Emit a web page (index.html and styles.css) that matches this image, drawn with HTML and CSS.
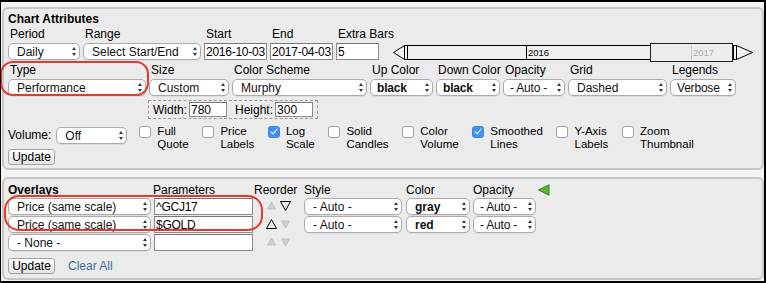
FILE: index.html
```html
<!DOCTYPE html>
<html>

<head>
    <meta name="viewport" content="width=device-width, initial-scale=1.0">
    <link rel="stylesheet" href="styles.css">
</head>

<body>
    <div class="frame">
        <div class="panel attrs">
            <div class="title">Chart Attributes</div>

            <div class="row r1">
                <div class="field f-period"><label>Period</label><span class="sel"><select><option>Daily</option></select></span></div>
                <div class="field f-range"><label>Range</label><span class="sel"><select><option>Select Start/End</option></select></span></div>
                <div class="field f-date"><label>Start</label><input type="text" value="2016-10-03"></div>
                <div class="field f-date"><label>End</label><input type="text" value="2017-04-03"></div>
                <div class="field f-extra"><label>Extra Bars</label><input type="text" value="5"></div>
                <svg class="slider" width="362" height="21" viewBox="0 0 362 21">
                    <polygon points="1.5,10.5 12.5,3.5 12.5,17.5" fill="#f4f4f4" stroke="#000" />
                    <rect x="12.5" y="3.5" width="3" height="14" fill="#f4f4f4" stroke="#000" />
                    <rect x="15.5" y="3.5" width="325" height="14" fill="#efefef" stroke="#000" />
                    <line x1="134.5" y1="3.5" x2="134.5" y2="17.5" stroke="#000" />
                    <text x="136" y="14" class="yr">2016</text>
                    <rect x="258.5" y="1.5" width="82" height="18" fill="#ededed" stroke="#222" />
                    <line x1="299.5" y1="3.5" x2="299.5" y2="17.5" stroke="#c4c4c4" />
                    <text x="301" y="14" class="yr dim">2017</text>
                    <rect x="341.5" y="3.5" width="3" height="14" fill="#f4f4f4" stroke="#000" />
                    <polygon points="344.5,3.5 360.5,10.5 344.5,17.5" fill="#f4f4f4" stroke="#000" />
                </svg>
            </div>

            <div class="row r2">
                <div class="field f-type"><label>Type</label><span class="sel"><select><option>Performance</option></select></span></div>
                <div class="field f-size"><label>Size</label><span class="sel"><select><option>Custom</option></select></span></div>
                <div class="field f-scheme"><label>Color Scheme</label><span class="sel"><select><option>Murphy</option></select></span></div>
                <div class="field f-up"><label>Up Color</label><span class="sel narrow"><select class="bold"><option>black</option></select></span></div>
                <div class="field f-down"><label>Down Color</label><span class="sel narrow"><select class="bold"><option>black</option></select></span></div>
                <div class="field f-opac"><label>Opacity</label><span class="sel narrow"><select><option>- Auto -</option></select></span></div>
                <div class="field f-grid"><label>Grid</label><span class="sel"><select><option>Dashed</option></select></span></div>
                <div class="field f-legend"><label>Legends</label><span class="sel narrow"><select><option>Verbose</option></select></span></div>
            </div>

            <div class="dims">
                <label>Width:</label><input type="text" value="780">
                <label class="h">Height:</label><input type="text" value="300">
            </div>

            <div class="row r3">
                <label class="vol">Volume:</label>
                <span class="sel s-vol"><select><option>Off</option></select></span>
                <label class="chk"><input type="checkbox"><span>Full<br>Quote</span></label>
                <label class="chk"><input type="checkbox"><span>Price<br>Labels</span></label>
                <label class="chk"><input type="checkbox" checked><span>Log<br>Scale</span></label>
                <label class="chk"><input type="checkbox"><span>Solid<br>Candles</span></label>
                <label class="chk"><input type="checkbox"><span>Color<br>Volume</span></label>
                <label class="chk"><input type="checkbox" checked><span>Smoothed<br>Lines</span></label>
                <label class="chk"><input type="checkbox"><span>Y-Axis<br>Labels</span></label>
                <label class="chk"><input type="checkbox"><span>Zoom<br>Thumbnail</span></label>
            </div>

            <button class="btn">Update</button>

            <div class="mark mark-type"></div>
        </div>

        <div class="panel overlays">
            <div class="ov-grid">
                <div class="title">Overlays</div>
                <div class="hd">Parameters</div>
                <div class="hd">Reorder</div>
                <div class="hd">Style</div>
                <div class="hd">Color</div>
                <div class="hd">Opacity</div>
                <div class="hd"><svg width="12" height="12" viewBox="0 0 12 12"><polygon points="0.5,6 11,0.8 11,11.2" fill="#5cb531" stroke="#2f8a1d" /></svg></div>

                <span class="sel s-ind"><select><option>Price (same scale)</option></select></span>
                <input type="text" class="param" value="^GCJ17">
                <div class="reorder">
                    <svg width="13" height="17"><polygon points="2.5,11 6.5,4 10.5,11" fill="#cdcdcd" stroke="#c2c2c2" /></svg>
                    <svg width="13" height="17"><polygon points="1.5,3.5 11.5,3.5 6.5,12.5" fill="none" stroke="#000" /></svg>
                </div>
                <span class="sel s-style"><select><option>- Auto -</option></select></span>
                <span class="sel s-color"><select class="bold"><option>gray</option></select></span>
                <span class="sel s-opac narrow"><select><option>- Auto -</option></select></span>
                <div></div>

                <span class="sel s-ind"><select><option>Price (same scale)</option></select></span>
                <input type="text" class="param" value="$GOLD">
                <div class="reorder">
                    <svg width="13" height="17"><polygon points="1.5,12.5 6.5,3.5 11.5,12.5" fill="none" stroke="#000" /></svg>
                    <svg width="13" height="17"><polygon points="2.5,5 10.5,5 6.5,12" fill="#cdcdcd" stroke="#c2c2c2" /></svg>
                </div>
                <span class="sel s-style"><select><option>- Auto -</option></select></span>
                <span class="sel s-color"><select class="bold"><option>red</option></select></span>
                <span class="sel s-opac narrow"><select><option>- Auto -</option></select></span>
                <div></div>

                <span class="sel s-ind"><select><option>- None -</option></select></span>
                <input type="text" class="param" value="">
                <div class="reorder">
                    <svg width="13" height="17"><polygon points="2.5,11 6.5,4 10.5,11" fill="#cdcdcd" stroke="#c2c2c2" /></svg>
                    <svg width="13" height="17"><polygon points="2.5,5 10.5,5 6.5,12" fill="#cdcdcd" stroke="#c2c2c2" /></svg>
                </div>
            </div>

            <div class="actions">
                <button class="btn">Update</button>
                <a href="#" class="clear">Clear All</a>
            </div>

            <div class="mark mark-ov"></div>
        </div>
    </div>
</body>

</html>
```

FILE: styles.css
```css
body {
    margin: 0;
    font-family: "Liberation Sans", Arial, Helvetica, sans-serif;
    font-size: 12px;
    color: #000;
}

.frame {
    width: 766px;
    height: 283px;
    box-sizing: border-box;
    border: 2px solid #000;
    border-left-width: 1px;
    background-color: #f3f3f3;
    overflow: hidden;
}

.panel {
    position: relative;
    margin: 5px 0 0 1px;
    border: 2px solid #c6c6c6;
    border-radius: 6px;
    background-color: #ebebeb;
    padding: 3px 4px 3px 4px;
}

.overlays {
    margin-top: 7px;
    padding: 4px 4px 4px 4px;
}

.title {
    font-weight: bold;
    line-height: 15px;
}

.row {
    display: flex;
    gap: 3px;
}

.r1 {
    align-items: flex-end;
}

.r2 {
    margin-top: 3px;
}

.field {
    display: flex;
    flex-direction: column;
}

.field label {
    line-height: 15px;
    padding-left: 2px;
    margin-bottom: 1px;
    white-space: nowrap;
}

.f-period { width: 72px; }
.f-range { width: 118px; }
.f-date { width: 63px; }
.f-extra { width: 43px; }
.f-type { width: 138px; }
.f-size { width: 80px; }
.f-scheme { width: 135px; }
.f-up { width: 63px; }
.f-down { width: 64px; }
.f-opac { width: 62px; }
.f-grid { width: 99px; }
.f-legend { width: 66px; }

.slider {
    margin-left: 10px;
    margin-bottom: -3px;
}

.yr {
    font-family: "Liberation Sans", Arial, sans-serif;
    font-size: 9.5px;
    fill: #000;
}

.yr.dim {
    fill: #adadad;
}

/* mac style selects */
.sel {
    position: relative;
    display: block;
    height: 17px;
}

.sel select {
    -webkit-appearance: none;
    appearance: none;
    width: 100%;
    height: 17px;
    box-sizing: border-box;
    margin: 0;
    padding: 0 14px 0 8px;
    border: 1px solid #ababab;
    border-radius: 5px;
    background-color: #fff;
    box-shadow: 0 1px 0 rgba(0, 0, 0, 0.06);
    font-family: inherit;
    font-size: 12px;
    color: #111;
}

.sel.narrow select {
    padding: 0 10px 0 6px;
    letter-spacing: -0.2px;
}

.sel select.bold {
    font-weight: bold;
}

.sel::before,
.sel::after {
    content: "";
    position: absolute;
    right: 4px;
    top: 50%;
    border-left: 2.5px solid transparent;
    border-right: 2.5px solid transparent;
    pointer-events: none;
}

.sel::before {
    margin-top: -5px;
    border-bottom: 3.5px solid #2f3848;
}

.sel::after {
    margin-top: 1px;
    border-top: 3.5px solid #2f3848;
}

input[type="text"] {
    height: 17px;
    box-sizing: border-box;
    margin: 0;
    padding: 0 0 0 1px;
    border: 1px solid #8c8c8c;
    border-top-color: #777;
    background-color: #fff;
    font-family: inherit;
    font-size: 12px;
    letter-spacing: -0.25px;
    color: #000;
}

.dims {
    display: flex;
    align-items: center;
    width: 170px;
    height: 19px;
    box-sizing: border-box;
    margin: 4px 0 0 140px;
    padding: 0 3px 0 4px;
    border: 1px dashed #9a9a9a;
}

.dims label {
    margin-right: 2px;
}

.dims label.h {
    margin-left: 8px;
}

.dims input[type="text"] {
    width: 38px;
    height: 15px;
    letter-spacing: 0;
}

.r3 {
    margin-top: 7px;
    gap: 0;
    align-items: flex-start;
    height: 22px;
}

.vol {
    line-height: 17px;
    margin-top: 1px;
}

.s-vol {
    width: 71px;
    margin: 1px 0 0 5px;
}

.chk {
    display: flex;
    align-items: flex-start;
    margin-left: 13.7px;
}

.s-vol + .chk {
    margin-left: 12px;
}

.chk span {
    font-size: 11.5px;
    line-height: 13.3px;
    margin-top: -1px;
    margin-left: 6px;
}

.chk input {
    -webkit-appearance: none;
    appearance: none;
    position: relative;
    width: 12px;
    height: 12px;
    margin: 0;
    border: 1px solid #a2a2a2;
    border-radius: 3px;
    background-color: #fff;
}

.chk input:checked {
    border-color: #3b86e8;
    background-color: #3f8ff5;
}

.chk input:checked::after {
    content: "";
    position: absolute;
    left: 3px;
    top: 0px;
    width: 3px;
    height: 6px;
    border: solid #fff;
    border-width: 0 1.5px 1.5px 0;
    transform: rotate(40deg);
}

.btn {
    display: block;
    width: 47px;
    height: 16px;
    margin: 1px 0 0 0;
    padding: 0;
    border: 1px solid #a3a3a3;
    border-radius: 3px;
    background: linear-gradient(#ffffff, #e4e4e4);
    font-family: inherit;
    font-size: 12px;
    color: #000;
}

.ov-grid {
    display: grid;
    grid-template-columns: 145px 101px 50px 102px 67px 65px auto;
    grid-template-rows: 14px 17px 17px 17px;
    row-gap: 1px;
    align-items: center;
}

.ov-grid .title {
    line-height: 14px;
}

.hd {
    line-height: 14px;
    height: 14px;
}

.hd svg {
    display: block;
    margin-top: 1px;
}

.s-ind { width: 143px; }
.s-style { width: 98px; }
.s-color { width: 64px; }
.s-opac { width: 63px; }

.param {
    width: 99px;
    margin-left: 1px !important;
}

.reorder {
    display: flex;
    gap: 1px;
    padding-left: 11px;
}

.reorder svg {
    display: block;
}

.actions {
    display: flex;
    align-items: center;
    margin-top: 7px;
}

.actions .btn {
    margin: 0;
}

.clear {
    margin-left: 13px;
    color: #3a6ca6;
    text-decoration: none;
}

/* red annotation rings */
.mark {
    position: absolute;
    border: 2px solid #e4392b;
    border-radius: 13px;
    pointer-events: none;
}

.mark-type {
    left: -4px;
    top: 52px;
    width: 145px;
    height: 31px;
}

.mark-ov {
    left: 0px;
    top: 16px;
    width: 255px;
    height: 32px;
    border-radius: 15px;
}
```
